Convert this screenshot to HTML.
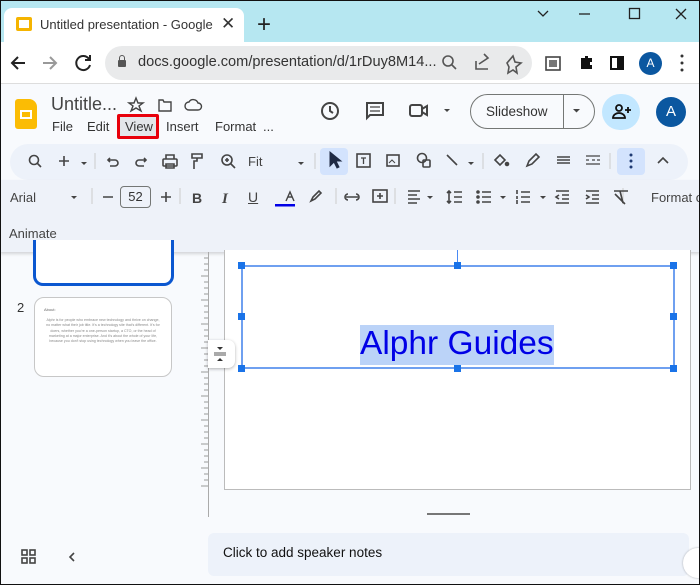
<!DOCTYPE html>
<html><head><meta charset="utf-8"><style>
*{margin:0;padding:0;box-sizing:border-box}
body{width:700px;height:585px;overflow:hidden;font-family:"Liberation Sans",Arial,sans-serif;background:#f8fafd;position:relative;color:#444746}
.a{position:absolute}
.t{position:absolute;white-space:nowrap}
svg{position:absolute;overflow:visible}
</style></head><body>
<!-- tab bar -->
<div class="a" style="left:0;top:0;width:700px;height:42px;background:#b6e7f1"></div>
<div class="a" style="left:4px;top:8px;width:240px;height:36px;background:#fff;border-radius:8px 8px 0 0"></div>
<div class="a" style="left:16px;top:17px;width:16px;height:14px;background:#f5b400;border-radius:2px"></div>
<div class="a" style="left:19px;top:20px;width:10px;height:8px;background:#fff"></div>
<div class="t" style="left:40px;top:17px;font-size:13px;color:#333;width:176px;overflow:hidden">Untitled presentation - Google Sl</div>
<div class="t" style="left:221px;top:14px;font-size:17px;color:#333">✕</div>
<div class="t" style="left:257px;top:11px;font-size:24px;color:#222">+</div>
<svg width="700" height="42" style="left:0;top:0" stroke="#222" stroke-width="1.3" fill="none">
<path d="M538 11l5 5 5-5"/><path d="M579 14h11"/><rect x="629.5" y="8.5" width="10" height="10"/><path d="M676 9l10 10M686 9l-10 10"/></svg>
<!-- address row -->
<div class="a" style="left:0;top:42px;width:700px;height:42px;background:#fff;border-bottom:1px solid #ddd"></div>
<svg width="700" height="40" style="left:0;top:44px" fill="none" stroke-width="2">
<path d="M25 19H12M18 13l-6 6 6 6" stroke="#222"/><path d="M43 19h13M50 13l6 6-6 6" stroke="#999"/>
<path d="M89 15a7 7 0 1 0 1 6" stroke="#222"/><path d="M90 11v5h-5" stroke="#222"/></svg>
<div class="a" style="left:105px;top:46px;width:427px;height:34px;background:#e9eaeb;border-radius:17px"></div>
<div class="a" style="left:118px;top:60px;width:8px;height:7px;background:#555;border-radius:1px"></div>
<div class="a" style="left:119px;top:55px;width:6px;height:7px;border:1.5px solid #555;border-radius:3px 3px 0 0"></div>
<div class="t" style="left:138px;top:54px;font-size:14.6px;color:#333">docs.google.com/presentation/d/1rDuy8M14...</div>
<svg width="700" height="40" style="left:0;top:44px" fill="none" stroke="#555" stroke-width="1.6">
<circle cx="448" cy="17" r="5"/><path d="M452 21l4 4"/>
<path d="M476 17v8h12M479 20l9-6-4-4" /><path d="M507 19l6-7 2 6 6 1-5 4 1 6-4-3-5 3 1-6z"/>
<rect x="546" y="13" width="14" height="13" stroke="#444"/><rect x="549" y="16" width="8" height="7" fill="#777" stroke="none"/>
<path d="M581 14h4v-2h3v2h4v4h-2v3h2v4h-11z" fill="#111" stroke="none"/>
<rect x="611" y="13" width="12" height="12" stroke="#111" stroke-width="2"/><rect x="617" y="13" width="6" height="12" fill="#111" stroke="none"/>
<circle cx="682" cy="12" r="1.5" fill="#333" stroke="none"/><circle cx="682" cy="19" r="1.5" fill="#333" stroke="none"/><circle cx="682" cy="26" r="1.5" fill="#333" stroke="none"/></svg>
<div class="a" style="left:639px;top:52px;width:23px;height:23px;border-radius:50%;background:#0b57a0;color:#fff;font-size:12px;text-align:center;line-height:23px">A</div>
<!-- app header -->
<div class="a" style="left:15px;top:99px;width:22px;height:30px;background:#fbbc04;border-radius:3px 8px 3px 3px"></div>
<div class="a" style="left:20px;top:110px;width:12px;height:9px;border:2px solid #fff"></div>
<div class="t" style="left:51px;top:94px;font-size:18px;color:#444">Untitle...</div>
<svg width="100" height="20" style="left:128px;top:96px" fill="none" stroke="#444" stroke-width="1.4">
<path d="M8 2l2 5h5l-4 3 2 5-5-3-5 3 2-5-4-3h5z"/><path d="M31 4h4l1 2h7v9H31z"/><path d="M61 14a4 4 0 0 1 0-8a5 5 0 0 1 9 1a3 3 0 0 1 0 7z"/></svg>
<div class="t" style="left:52px;top:119px;font-size:13px;color:#333">File</div>
<div class="t" style="left:87px;top:119px;font-size:13px;color:#333">Edit</div>
<div class="a" style="left:117px;top:114px;width:42px;height:25px;border:3px solid #e8000b;background:#e3e6ea;border-radius:2px"></div>
<div class="t" style="left:125px;top:119px;font-size:13px;color:#333">View</div>
<div class="t" style="left:166px;top:119px;font-size:13px;color:#333">Insert</div>
<div class="t" style="left:215px;top:119px;font-size:13px;color:#333">Format</div>
<div class="t" style="left:263px;top:119px;font-size:13px;color:#333">...</div>
<svg width="160" height="30" style="left:318px;top:97px" fill="none" stroke="#444" stroke-width="2">
<circle cx="12" cy="14" r="8"/><path d="M12 9v5l3 2"/><path d="M49 6h16v12H52l-3 3z"/><path d="M52 10h10M52 14h10" stroke-width="1.3"/>
<rect x="92" y="8" width="12" height="11" rx="2"/><path d="M104 12l5-3v9l-5-3"/><path d="M126 12l3 3 3-3z" fill="#444" stroke="none"/></svg>
<div class="a" style="left:470px;top:94px;width:125px;height:35px;border:1px solid #747775;border-radius:18px"></div>
<div class="a" style="left:563px;top:95px;width:1px;height:33px;background:#747775"></div>
<div class="t" style="left:486px;top:104px;font-size:13.5px;color:#333">Slideshow</div>
<svg width="10" height="6" style="left:573px;top:109px"><path d="M0 0h7l-3.5 3.5z" fill="#444"/></svg>
<div class="a" style="left:602px;top:94px;width:38px;height:36px;border-radius:18px;background:#c2e7ff"></div>
<svg width="20" height="16" style="left:612px;top:104px" fill="none" stroke="#111" stroke-width="1.8"><circle cx="7" cy="4" r="3"/><path d="M1 14a6 5 0 0 1 12 0z"/><path d="M16 3v6M13 6h6"/></svg>
<div class="a" style="left:656px;top:97px;width:30px;height:30px;border-radius:50%;background:#0b57a0;color:#fff;font-size:15px;text-align:center;line-height:30px">A</div>
<!-- toolbar 1 -->
<div class="a" style="left:10px;top:144px;width:678px;height:36px;background:#edf2fa;border-radius:18px"></div>
<div class="a" style="left:320px;top:148px;width:28px;height:27px;background:#d3e3fd;border-radius:4px"></div>
<div class="a" style="left:617px;top:148px;width:28px;height:27px;background:#d3e3fd;border-radius:4px"></div>
<svg width="700" height="40" style="left:0;top:142px" fill="none" stroke="#444" stroke-width="1.6">
<circle cx="34" cy="18" r="4.5"/><path d="M37 21l4 4"/><path d="M64 14v10M59 19h10"/><path d="M81 20l3 3 3-3z" fill="#444" stroke="none"/>
<path d="M95 11v16" stroke="#ccc" stroke-width="1"/><path d="M108 18h7a3 3 0 0 1 0 6h-5M110 16l-2 2 2 2"/><path d="M146 18h-7a3 3 0 0 0 0 6h5M144 16l2 2-2 2"/>
<rect x="163" y="17" width="14" height="7" rx="1"/><path d="M166 17v-4h8v4M166 22h8v4h-8z"/>
<path d="M192 12h10v4h-10zM197 16v3h-3v8"/><circle cx="227" cy="18" r="5"/><path d="M231 22l4 4M225 18h4M227 16v4"/>
<path d="M298 20l3 3 3-3z" fill="#444" stroke="none"/><path d="M315 11v16" stroke="#ccc" stroke-width="1"/>
<path d="M330 10l0 14 4-4 3 6 2-1-3-6h5z" fill="#1f2a44" stroke="#1f2a44" stroke-width="1"/>
<rect x="357" y="12" width="13" height="13"/><path d="M361 16h5M363.5 16v6" stroke-width="1.3"/>
<rect x="387" y="13" width="12" height="11"/><path d="M389 21l3-3 3 3" stroke-width="1"/>
<circle cx="422" cy="16" r="4.5"/><rect x="423" y="18" width="7" height="7" rx="1"/>
<path d="M447 13l10 10"/><path d="M468 20l3 3 3-3z" fill="#444" stroke="none"/><path d="M483 11v16" stroke="#ccc" stroke-width="1"/>
<path d="M495 18l5-5 5 5-5 5z"/><circle cx="507" cy="22" r="1.5" fill="#444"/>
<path d="M527 24l2-5 7-7 3 3-7 7z"/><path d="M557 15h13M557 18h13M557 21h13"/><path d="M586 14h14M586 18h3M592 18h3M597 18h3M586 22h14" stroke-width="1.3"/>
<path d="M610 11v16" stroke="#ccc" stroke-width="1"/><circle cx="631" cy="13" r="1.5" fill="#1f3a73" stroke="none"/><circle cx="631" cy="19" r="1.5" fill="#1f3a73" stroke="none"/><circle cx="631" cy="25" r="1.5" fill="#1f3a73" stroke="none"/>
<path d="M658 21l5-5 5 5"/></svg>
<div class="t" style="left:248px;top:154px;font-size:13px;color:#444">Fit</div>
<!-- toolbar 2 panel -->
<div class="a" style="left:0;top:180px;width:700px;height:72px;background:#eef2f9;box-shadow:0 2px 3px rgba(0,0,0,.15)"></div>
<div class="t" style="left:10px;top:190px;font-size:13px;color:#444">Arial</div>
<div class="t" style="left:651px;top:190px;font-size:13px;color:#444">Format o</div>
<div class="a" style="left:120px;top:186px;width:31px;height:22px;border:1px solid #747775;border-radius:4px;font-size:13px;text-align:center;line-height:20px;color:#333">52</div>
<svg width="700" height="40" style="left:0;top:178px" fill="none" stroke="#444" stroke-width="1.6">
<path d="M71 18l3 3 3-3z" fill="#444" stroke="none"/><path d="M92 10v16M180 10v16M336 10v16M395 10v16M623 10v16" stroke="#ccc" stroke-width="1"/>
<path d="M103 19h10M161 19h10M166 14v10"/>
<path d="M286 23l4-9 4 9M288 19h4" stroke-width="1.4"/><rect x="275" y="26" width="20" height="2.5" fill="#0000e6" stroke="none"/>
<path d="M311 23l2-4 6-6 2 2-6 6z"/>
<path d="M346 19h12M348 16a3 3 0 0 0 0 6M356 16a3 3 0 0 1 0 6"/><rect x="373" y="12" width="14" height="12"/><path d="M380 15v6M377 18h6"/>
<path d="M408 13h12M408 17h9M408 21h12M408 25h9"/><path d="M427 18l3 3 3-3z" fill="#444" stroke="none"/>
<path d="M449 13v12M447 15l2-2 2 2M447 23l2 2 2-2M454 14h8M454 19h8M454 24h8"/>
<path d="M482 14h9M482 19h9M482 24h9"/><circle cx="478" cy="14" r="1" fill="#444"/><circle cx="478" cy="19" r="1" fill="#444"/><circle cx="478" cy="24" r="1" fill="#444"/>
<path d="M500 18l3 3 3-3z" fill="#444" stroke="none"/><path d="M521 14h9M521 19h9M521 24h9M517 12v4M517 18v3M517 22v4" /><path d="M540 18l3 3 3-3z" fill="#444" stroke="none"/>
<path d="M556 13h13M562 17h7M562 21h7M556 25h13M559 17l-3 2 3 2"/>
<path d="M586 13h13M592 17h7M592 21h7M586 25h13M586 17l3 2-3 2"/>
<path d="M614 13h14M620 13l3 12M615 16l10 10"/></svg>
<svg width="30" height="20" style="left:189px;top:188px"><text x="3" y="15" font-family="Liberation Sans" font-weight="bold" font-size="14" fill="#444">B</text><text x="33" y="15" font-family="Liberation Serif" font-style="italic" font-weight="bold" font-size="15" fill="#444">I</text></svg>
<div class="t" style="left:248px;top:189px;font-size:14px;text-decoration:underline;color:#444">U</div>
<div class="t" style="left:9px;top:226px;font-size:13px;color:#444">Animate</div>
<!-- left panel -->
<div class="a" style="left:33px;top:240px;width:141px;height:46px;border:3px solid #0b57d0;border-top:none;border-radius:0 0 10px 10px;background:#fff"></div>
<div class="t" style="left:17px;top:300px;font-size:13px;color:#333">2</div>
<div class="a" style="left:34px;top:297px;width:138px;height:80px;border:1px solid #c7c7c7;border-radius:10px;background:#fff"></div>
<div class="a" style="left:44px;top:307px;font-size:4px;color:#666">About:</div>
<div class="a" style="left:44px;top:318px;width:118px;font-size:3.6px;line-height:5.3px;color:#888;text-align:center">Alphr is for people who embrace new technology and thrive on change, no matter what their job title. It's a technology site that's different. It's for doers, whether you're a one-person startup, a CTO, or the head of marketing at a major enterprise. And it's about the whole of your life, because you don't stop using technology when you leave the office.</div>
<!-- ruler -->
<div class="a" style="left:208px;top:252px;width:1px;height:265px;background:#aaa"></div>
<svg width="12" height="240" style="left:200px;top:252px" stroke="#999" stroke-width="1">
<path d="M4 6h4M4 12h4M4 18h4M1 24h7M4 30h4M4 36h4M4 42h4M1 48h7M4 54h4M4 60h4M4 66h4M1 72h7M4 78h4M4 84h4M4 90h4M1 96h7M4 102h4M4 108h4M4 114h4M1 120h7M4 126h4M4 132h4M4 138h4M1 144h7M4 150h4M4 156h4M4 162h4M1 168h7M4 174h4M4 180h4M4 186h4M1 192h7M4 198h4M4 204h4M4 210h4M1 216h7M4 222h4M4 228h4M1 234h7"/></svg>
<!-- slide -->
<div class="a" style="left:224px;top:250px;width:467px;height:240px;background:#fff;border:1px solid #bbb;border-top:none"></div>
<div class="a" style="left:457px;top:250px;width:1px;height:15px;background:#4a8af4"></div>
<div class="a" style="left:241px;top:265px;width:434px;height:104px;border:2px solid #6fa0f0"></div>
<div class="a" style="left:360px;top:325px;width:194px;height:40px;background:#bbd3f8"></div>
<div class="t" style="left:360px;top:325px;font-size:33.5px;color:#0000e6">Alphr Guides</div>
<div class="a" style="left:238px;top:262px;width:7px;height:7px;background:#1a73e8"></div>
<div class="a" style="left:454px;top:262px;width:7px;height:7px;background:#1a73e8"></div>
<div class="a" style="left:670px;top:262px;width:7px;height:7px;background:#1a73e8"></div>
<div class="a" style="left:238px;top:313px;width:7px;height:7px;background:#1a73e8"></div>
<div class="a" style="left:670px;top:313px;width:7px;height:7px;background:#1a73e8"></div>
<div class="a" style="left:238px;top:365px;width:7px;height:7px;background:#1a73e8"></div>
<div class="a" style="left:454px;top:365px;width:7px;height:7px;background:#1a73e8"></div>
<div class="a" style="left:670px;top:365px;width:7px;height:7px;background:#1a73e8"></div>
<div class="a" style="left:208px;top:340px;width:27px;height:28px;background:#fff;border-radius:0 7px 7px 0;box-shadow:0 1px 3px rgba(0,0,0,.3)"></div>
<svg width="16" height="16" style="left:212px;top:346px"><path d="M2 7h12M2 9h12" stroke="#555"/><path d="M5 1h6l-3 3z M5 15h6l-3-3z" fill="#333"/></svg>
<div class="a" style="left:427px;top:513px;width:43px;height:2px;background:#777"></div>
<!-- notes -->
<div class="a" style="left:208px;top:533px;width:481px;height:43px;background:#edf2fa;border-radius:6px"></div>
<div class="t" style="left:223px;top:545px;font-size:13.5px;color:#111">Click to add speaker notes</div>
<div class="a" style="left:683px;top:548px;width:30px;height:30px;border-radius:50%;background:#fff;box-shadow:0 0 2px rgba(0,0,0,.3)"></div>
<svg width="100" height="20" style="left:20px;top:548px" fill="none" stroke="#444" stroke-width="1.6">
<rect x="2" y="2" width="5" height="5"/><rect x="10" y="2" width="5" height="5"/><rect x="2" y="10" width="5" height="5"/><rect x="10" y="10" width="5" height="5"/><path d="M54 5l-4 4 4 4"/></svg>
<div class="a" style="left:0;top:0;width:700px;height:585px;border:1px solid #111;pointer-events:none"></div>
</body></html>
